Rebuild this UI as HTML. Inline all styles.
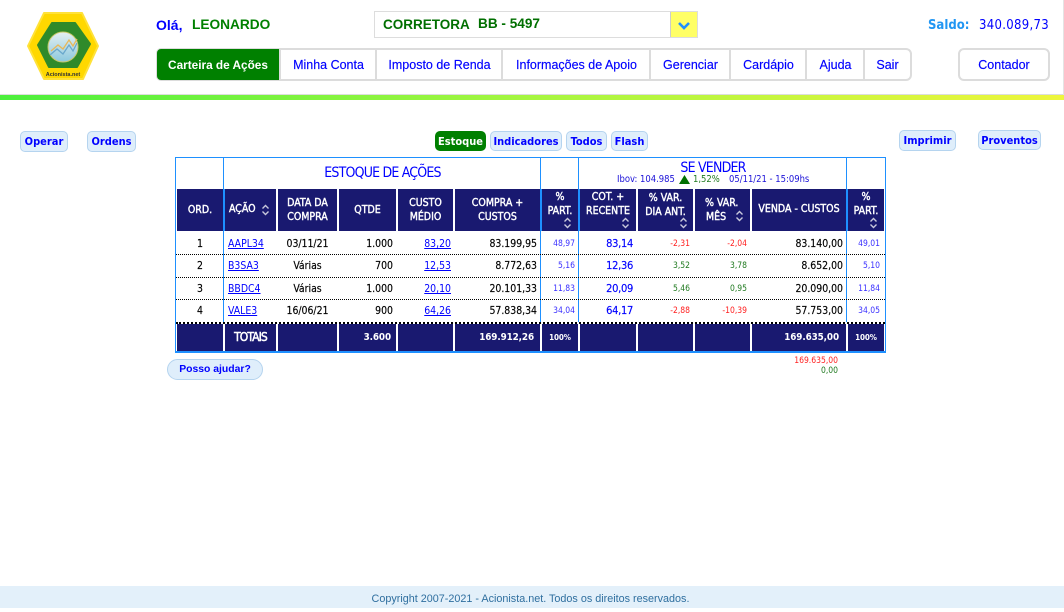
<!DOCTYPE html>
<html lang="pt-BR"><head><meta charset="utf-8"><title>Acionista.net</title>
<style>
html,body{margin:0;padding:0;background:#fff}
body{position:relative;width:1064px;height:608px;overflow:hidden;font-family:"DejaVu Sans Condensed","DejaVu Sans","Liberation Sans",sans-serif;font-stretch:condensed;font-size:10px}
div,svg{position:absolute}
.a{font-family:"Liberation Sans",Arial,sans-serif;font-stretch:normal}
.nav{top:48px;height:33px;box-sizing:border-box;border:solid #dcdcdc;border-width:2px 0 2px 2px;background:#fff;color:#0000ff;font:12.5px/30px "Liberation Sans",sans-serif;-webkit-text-stroke:.15px #0000ff;text-align:center}
.b{box-sizing:border-box;background:#dfeefb;border:1px solid #b5d4ef;border-radius:5px;color:#0000ff;font-weight:bold;font-size:11px;line-height:19px;text-align:center;white-space:nowrap}
.h{background:#191970;top:189px;height:42px;color:#fff;font-size:10.5px;-webkit-text-stroke:.4px #fff;line-height:14px;text-align:center}
.f{background:#191970;top:324px;height:27px;color:#fff;font-weight:bold;line-height:27px;text-align:center;font-size:9.8px;letter-spacing:-.1px;box-sizing:border-box}
.l{background:#1e90ff}
.c{height:14px;line-height:14px;white-space:nowrap;font-size:10.4px}
.d{left:176px;width:709px;height:0;border-top:1px dotted #000}
.s{font-size:8.5px;color:#3a30ff}
.m{color:#0000ff;font-size:11px;letter-spacing:-.3px;-webkit-text-stroke:.15px #0000ff}
.k{color:#000;-webkit-text-stroke:.15px #000}
.sm{font-size:8.5px}
.r{color:#ff2020}.g{color:#207a20}
a{color:#0000ff;text-decoration:underline}
</style></head><body>

<!-- top -->
<div style="left:0;top:94px;width:1064px;height:1px;background:#ddd"></div>
<div style="left:1063px;top:0;width:1px;height:95px;background:#e4e4e4"></div>
<div style="left:0;top:95px;width:1064px;height:5px;background:linear-gradient(90deg,#4cf03c,#a6f640 50%,#eef63c)"></div>

<svg style="left:20px;top:5px" width="90" height="85" viewBox="0 0 90 85">
<defs><linearGradient id="cg" x1="0" y1="0" x2="0" y2="1"><stop offset="0" stop-color="#e4f0f2"/><stop offset="1" stop-color="#8cc8de"/></linearGradient></defs>
<polygon points="24,8 62,8 78,41 63,74 24,74 8,41" fill="#ffd800" stroke="#ffe23a" stroke-width="2" stroke-linejoin="round"/>
<polygon points="32,18 55,18 70,39 57,62 29,62 18,40" fill="#2f8a2a" stroke="#2f8a2a" stroke-width="2" stroke-linejoin="round"/>
<circle cx="43" cy="42" r="15" fill="url(#cg)" stroke="#c9c86a" stroke-width="1"/>
<polyline points="31,46 38,40 43,44 49,35 53,41 57,34" fill="none" stroke="#e8b85a" stroke-width="1.3"/>
<polyline points="30,50 37,44 43,49 49,40 53,46 57,38" fill="none" stroke="#6aa8cc" stroke-width="1.3"/>
<text x="43" y="71" font-family="Liberation Sans,sans-serif" font-size="5.5" font-weight="bold" text-anchor="middle" fill="#333">Acionista.net</text>
</svg>

<div class="a" style="left:156px;top:17px;font-size:14px;font-weight:bold;line-height:16px;color:#0000ff;white-space:nowrap">Olá,</div>
<div class="a" style="left:192px;top:17px;font-size:13.7px;font-weight:bold;line-height:16px;color:#008000;white-space:nowrap">LEONARDO</div>

<div style="left:374px;top:11px;width:324px;height:27px;box-sizing:border-box;border:1px solid #ddd;background:#fff"></div>
<div class="a" style="left:383px;top:17px;font-size:13.5px;font-weight:bold;line-height:16px;color:#006f00;white-space:nowrap">CORRETORA</div>
<div class="a" style="left:478px;top:16px;font-size:13.6px;font-weight:bold;line-height:16px;color:#006f00;white-space:nowrap">BB - 5497</div>
<div style="left:670px;top:12px;width:27px;height:25px;background:#ffff66;border-left:1px solid #ccc;box-sizing:border-box"></div>
<svg style="left:677px;top:21px" width="14" height="9" viewBox="0 0 14 9"><path d="M2 2 L7 7 L12 2" fill="none" stroke="#1e90ff" stroke-width="2.6"/></svg>

<div class="nav" style="left:156px;width:124px;background:#008000;color:#fff;-webkit-text-stroke:0;border-radius:5px 0 0 5px;font-weight:bold;font-size:11.8px;border-width:1px;line-height:32px">Carteira de Ações</div>
<div class="nav" style="left:279px;width:97px">Minha Conta</div>
<div class="nav" style="left:375px;width:127px">Imposto de Renda</div>
<div class="nav" style="left:501px;width:149px">Informações de Apoio</div>
<div class="nav" style="left:649px;width:81px">Gerenciar</div>
<div class="nav" style="left:729px;width:77px">Cardápio</div>
<div class="nav" style="left:805px;width:59px">Ajuda</div>
<div class="nav" style="left:863px;width:49px;border-right-width:2px;border-radius:0 6px 6px 0">Sair</div>
<div class="nav" style="left:958px;width:92px;border-width:2px;border-radius:6px">Contador</div>

<div style="left:928px;top:18px;font-size:13px;font-weight:bold;line-height:16px;color:#2196f3;white-space:nowrap">Saldo:</div>
<div style="left:979px;top:18px;font-size:13px;line-height:16px;color:#0000ff;white-space:nowrap;letter-spacing:.3px">340.089,73</div>

<!-- buttons -->
<div class="b" style="left:20px;top:131px;width:48px;height:21px">Operar</div>
<div class="b" style="left:87px;top:131px;width:49px;height:21px;line-height:20px">Ordens</div>
<div class="b" style="left:435px;top:131px;width:51px;height:20px;background:#008000;border-color:#008000;color:#fff">Estoque</div>
<div class="b" style="left:490px;top:131px;width:72px;height:20px">Indicadores</div>
<div class="b" style="left:566px;top:131px;width:41px;height:20px">Todos</div>
<div class="b" style="left:611px;top:131px;width:37px;height:20px">Flash</div>
<div class="b" style="left:899px;top:130px;width:57px;height:21px;line-height:20px">Imprimir</div>
<div class="b" style="left:978px;top:130px;width:63px;height:20px;line-height:19px">Proventos</div>
<div class="b a" style="left:167px;top:359px;width:96px;height:21px;border-radius:11px;font-size:10.4px">Posso ajudar?</div>

<!-- table frame -->
<div style="left:175px;top:157px;width:711px;height:196px;box-sizing:border-box;border:1px solid #1e90ff;border-bottom-width:2px"></div>
<div class="l" style="left:223px;top:158px;width:1px;height:164px"></div>
<div class="l" style="left:540px;top:158px;width:1px;height:164px"></div>
<div class="l" style="left:578px;top:158px;width:1px;height:164px"></div>
<div class="l" style="left:846px;top:158px;width:1px;height:164px"></div>
<div class="l" style="left:223px;top:189px;width:2px;height:42px"></div>
<div class="l" style="left:540px;top:189px;width:2px;height:42px"></div>
<div class="l" style="left:578px;top:189px;width:2px;height:42px"></div>
<div class="l" style="left:846px;top:189px;width:2px;height:42px"></div>

<div style="left:224px;top:164px;width:316px;text-align:center;color:#0000ff;font-size:14px;line-height:18px;letter-spacing:-.8px;white-space:nowrap;text-indent:1px">ESTOQUE DE AÇÕES</div>
<div style="left:580px;top:160px;width:266px;text-align:center;color:#0000ff;font-size:14px;line-height:17px;letter-spacing:-.8px;white-space:nowrap">SE VENDER</div>
<div class="c" style="left:617px;top:173px;font-size:9.4px;color:#1a10d8">Ibov: 104.985</div>
<svg style="left:679px;top:175px" width="11" height="9" viewBox="0 0 11 9"><polygon points="5.5,0 11,9 0,9" fill="#007000"/></svg>
<div class="c g" style="left:693px;top:173px;font-size:9.4px">1,52%</div>
<div class="c" style="left:729px;top:173px;font-size:9.4px;color:#1a10d8">05/11/21 - 15:09hs</div>

<!-- header -->
<div class="h" style="left:177px;width:46px;line-height:42px">ORD.</div>
<div class="h" style="left:225px;width:51px;text-align:left;line-height:40px"><span style="margin-left:4px">AÇÃO</span></div>
<div class="h" style="left:278px;width:59px;padding-top:7px;height:35px">DATA DA<br>COMPRA</div>
<div class="h" style="left:339px;width:57px;line-height:42px">QTDE</div>
<div class="h" style="left:398px;width:55px;padding-top:7px;height:35px">CUSTO<br>MÉDIO</div>
<div class="h" style="left:455px;width:85px;padding-top:7px;height:35px">COMPRA +<br>CUSTOS</div>
<div class="h" style="left:542px;width:36px;padding-top:1px;height:41px">%<br>PART.</div>
<div class="h" style="left:580px;width:56px;padding-top:1px;height:41px">COT. +<br>RECENTE</div>
<div class="h" style="left:638px;width:55px;padding-top:2px;height:40px">% VAR.<br>DIA ANT.</div>
<div class="h" style="left:695px;width:55px;padding-top:7px;height:35px;text-align:left"><span style="margin-left:10px">% VAR.</span><br><span style="margin-left:11px">MÊS</span></div>
<div class="h" style="left:752px;width:94px;line-height:41px">VENDA - CUSTOS</div>
<div class="h" style="left:848px;width:36px;padding-top:1px;height:41px">%<br>PART.</div>

<svg style="left:261px;top:204px" width="9" height="12" viewBox="0 0 9 12"><path d="M1.5 4.5 L4.5 1.5 L7.5 4.5 M1.5 7.5 L4.5 10.5 L7.5 7.5" fill="none" stroke="#c8c8dc" stroke-width="1.4"/></svg>
<svg style="left:563px;top:217px" width="9" height="12" viewBox="0 0 9 12"><path d="M1.5 4.5 L4.5 1.5 L7.5 4.5 M1.5 7.5 L4.5 10.5 L7.5 7.5" fill="none" stroke="#c8c8dc" stroke-width="1.4"/></svg>
<svg style="left:621px;top:217px" width="9" height="12" viewBox="0 0 9 12"><path d="M1.5 4.5 L4.5 1.5 L7.5 4.5 M1.5 7.5 L4.5 10.5 L7.5 7.5" fill="none" stroke="#c8c8dc" stroke-width="1.4"/></svg>
<svg style="left:679px;top:217px" width="9" height="12" viewBox="0 0 9 12"><path d="M1.5 4.5 L4.5 1.5 L7.5 4.5 M1.5 7.5 L4.5 10.5 L7.5 7.5" fill="none" stroke="#c8c8dc" stroke-width="1.4"/></svg>
<svg style="left:735px;top:210px" width="9" height="12" viewBox="0 0 9 12"><path d="M1.5 4.5 L4.5 1.5 L7.5 4.5 M1.5 7.5 L4.5 10.5 L7.5 7.5" fill="none" stroke="#c8c8dc" stroke-width="1.4"/></svg>
<svg style="left:869px;top:217px" width="9" height="12" viewBox="0 0 9 12"><path d="M1.5 4.5 L4.5 1.5 L7.5 4.5 M1.5 7.5 L4.5 10.5 L7.5 7.5" fill="none" stroke="#c8c8dc" stroke-width="1.4"/></svg>

<!-- dotted -->
<div class="d" style="top:254px"></div>
<div class="d" style="top:277px"></div>
<div class="d" style="top:299px"></div>
<div class="d" style="top:322px;border-top-width:2px"></div>

<!-- row 1 -->
<div class="c k" style="left:177px;width:46px;top:237px;text-align:center">1</div>
<div class="c" style="left:228px;top:237px"><a>AAPL34</a></div>
<div class="c k" style="left:278px;width:59px;top:237px;text-align:center">03/11/21</div>
<div class="c k" style="right:671px;top:237px">1.000</div>
<div class="c" style="right:613px;top:237px"><a>83,20</a></div>
<div class="c k" style="right:527px;top:237px">83.199,95</div>
<div class="c s" style="right:489px;top:237px">48,97</div>
<div class="c m" style="right:431px;top:237px">83,14</div>
<div class="c sm r" style="right:374px;top:237px">-2,31</div>
<div class="c sm r" style="right:317px;top:237px">-2,04</div>
<div class="c k" style="right:221px;top:237px">83.140,00</div>
<div class="c s" style="right:184px;top:237px">49,01</div>

<!-- row 2 -->
<div class="c k" style="left:177px;width:46px;top:259px;text-align:center">2</div>
<div class="c" style="left:228px;top:259px"><a>B3SA3</a></div>
<div class="c k" style="left:278px;width:59px;top:259px;text-align:center">Várias</div>
<div class="c k" style="right:671px;top:259px">700</div>
<div class="c" style="right:613px;top:259px"><a>12,53</a></div>
<div class="c k" style="right:527px;top:259px">8.772,63</div>
<div class="c s" style="right:489px;top:259px">5,16</div>
<div class="c m" style="right:431px;top:259px">12,36</div>
<div class="c sm g" style="right:374px;top:259px">3,52</div>
<div class="c sm g" style="right:317px;top:259px">3,78</div>
<div class="c k" style="right:221px;top:259px">8.652,00</div>
<div class="c s" style="right:184px;top:259px">5,10</div>

<!-- row 3 -->
<div class="c k" style="left:177px;width:46px;top:282px;text-align:center">3</div>
<div class="c" style="left:228px;top:282px"><a>BBDC4</a></div>
<div class="c k" style="left:278px;width:59px;top:282px;text-align:center">Várias</div>
<div class="c k" style="right:671px;top:282px">1.000</div>
<div class="c" style="right:613px;top:282px"><a>20,10</a></div>
<div class="c k" style="right:527px;top:282px">20.101,33</div>
<div class="c s" style="right:489px;top:282px">11,83</div>
<div class="c m" style="right:431px;top:282px">20,09</div>
<div class="c sm g" style="right:374px;top:282px">5,46</div>
<div class="c sm g" style="right:317px;top:282px">0,95</div>
<div class="c k" style="right:221px;top:282px">20.090,00</div>
<div class="c s" style="right:184px;top:282px">11,84</div>

<!-- row 4 -->
<div class="c k" style="left:177px;width:46px;top:304px;text-align:center">4</div>
<div class="c" style="left:228px;top:304px"><a>VALE3</a></div>
<div class="c k" style="left:278px;width:59px;top:304px;text-align:center">16/06/21</div>
<div class="c k" style="right:671px;top:304px">900</div>
<div class="c" style="right:613px;top:304px"><a>64,26</a></div>
<div class="c k" style="right:527px;top:304px">57.838,34</div>
<div class="c s" style="right:489px;top:304px">34,04</div>
<div class="c m" style="right:431px;top:304px">64,17</div>
<div class="c sm r" style="right:374px;top:304px">-2,88</div>
<div class="c sm r" style="right:317px;top:304px">-10,39</div>
<div class="c k" style="right:221px;top:304px">57.753,00</div>
<div class="c s" style="right:184px;top:304px">34,05</div>

<!-- totals -->
<div class="f" style="left:177px;width:46px"></div>
<div class="f" style="left:225px;width:51px;font-size:12px;letter-spacing:-.9px;font-weight:normal;-webkit-text-stroke:.5px #fff">TOTAIS</div>
<div class="f" style="left:278px;width:59px"></div>
<div class="f" style="left:339px;width:57px;text-align:right;padding-right:5px">3.600</div>
<div class="f" style="left:398px;width:55px"></div>
<div class="f" style="left:455px;width:85px;text-align:right;padding-right:6px">169.912,26</div>
<div class="f" style="left:542px;width:36px;font-size:8px">100%</div>
<div class="f" style="left:580px;width:56px"></div>
<div class="f" style="left:638px;width:55px"></div>
<div class="f" style="left:695px;width:55px"></div>
<div class="f" style="left:752px;width:94px;text-align:right;padding-right:7px">169.635,00</div>
<div class="f" style="left:848px;width:36px;font-size:8px">100%</div>

<div class="c sm r" style="right:226px;top:354px">169.635,00</div>
<div class="c sm g" style="right:226px;top:364px">0,00</div>

<!-- footer -->
<div class="a" style="left:0;top:586px;width:1064px;height:22px;background:#e3f0fa;color:#2f6f9f;font-size:10.8px;line-height:26px;text-align:center;text-indent:-3px">Copyright 2007-2021 - Acionista.net. Todos os direitos reservados.</div>

</body></html>
